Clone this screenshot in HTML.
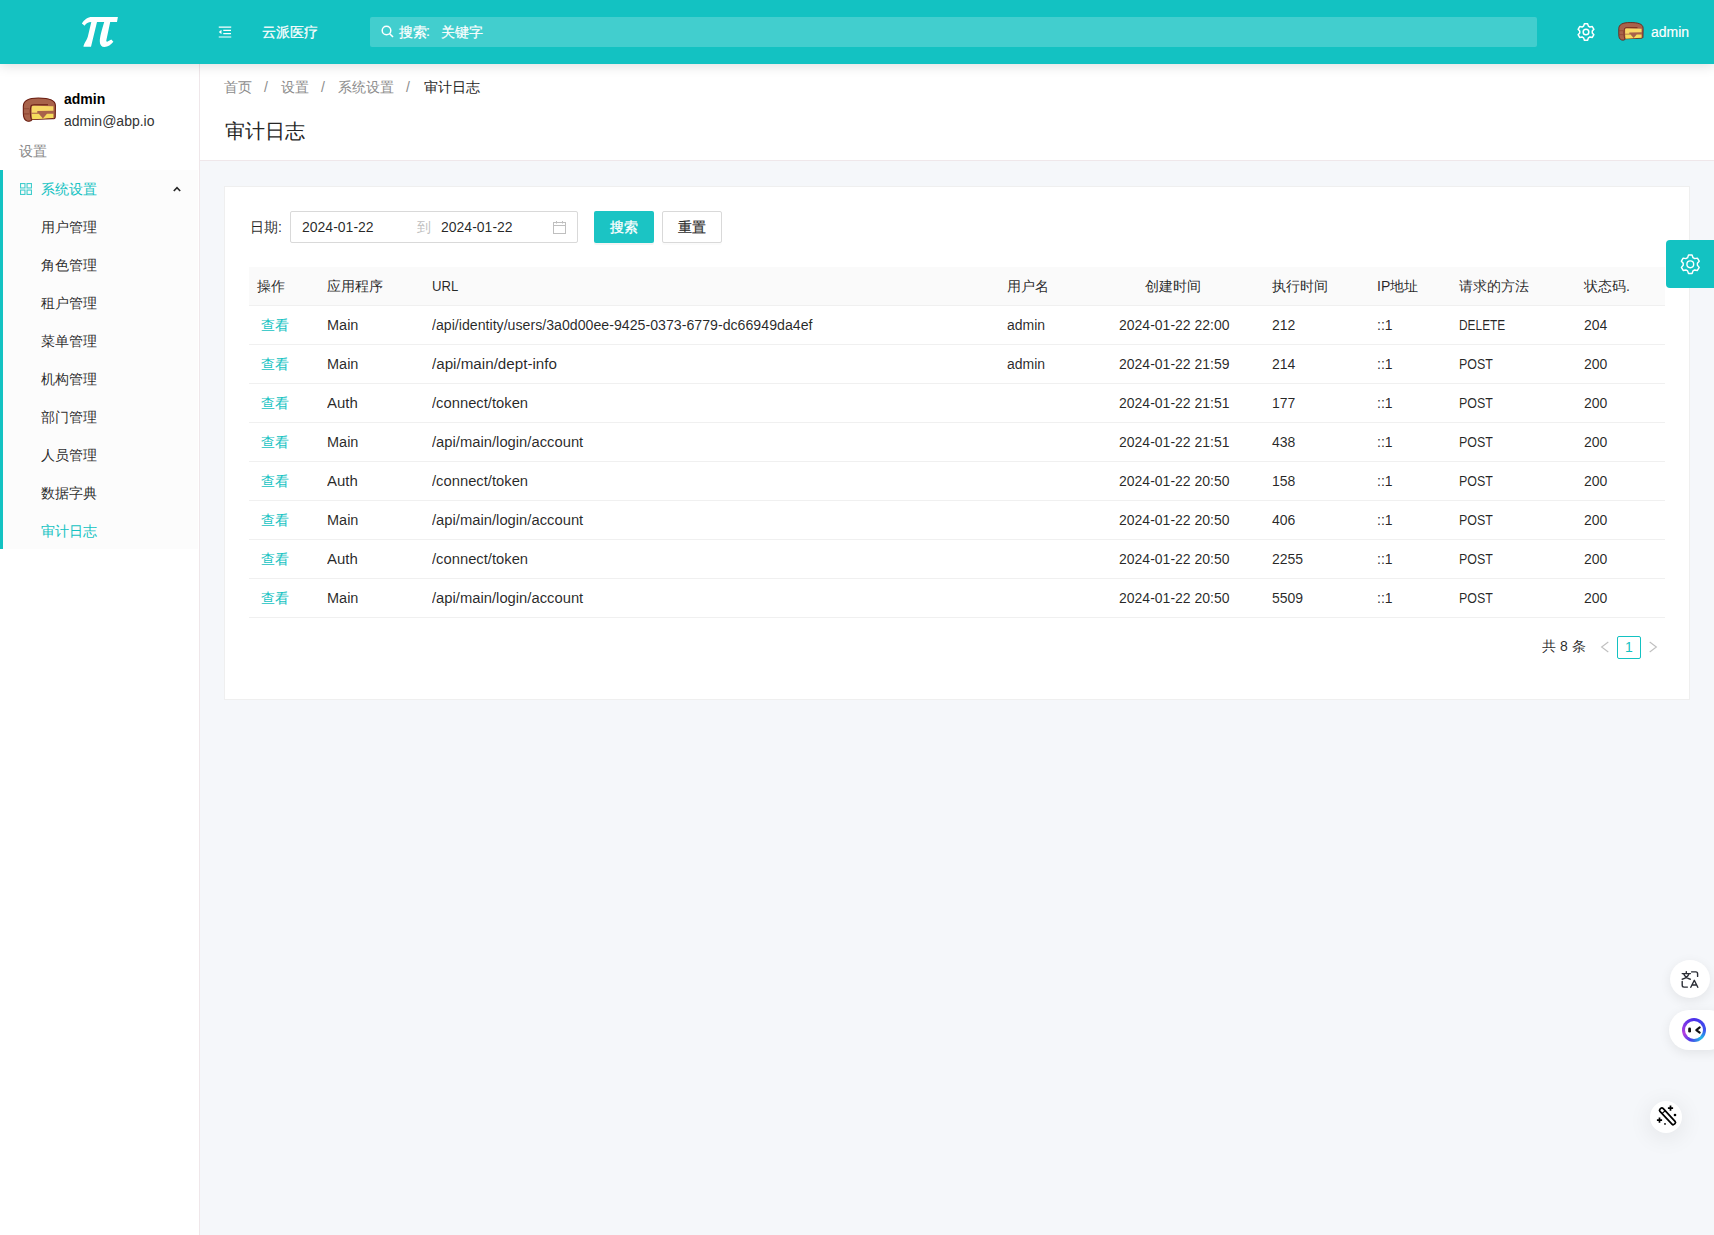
<!DOCTYPE html>
<html><head><meta charset="utf-8">
<style>
*{box-sizing:border-box;margin:0;padding:0}
html,body{width:1714px;height:1235px;overflow:hidden}
body{font-family:"Liberation Sans",sans-serif;font-size:14px;color:rgba(0,0,0,0.85);background:#f5f7fa;position:relative}
.abs{position:absolute}
.t{position:absolute;white-space:nowrap;line-height:20px}
/* header */
#hdr{position:absolute;left:0;top:0;width:1714px;height:64px;background:#13c2c2;box-shadow:0 1px 12px rgba(0,0,0,0.15);z-index:5}
#search{position:absolute;left:370px;top:17px;width:1167px;height:30px;background:rgba(255,255,255,0.2);border-radius:2px}
/* sidebar */
#side{position:absolute;left:0;top:64px;width:200px;height:1171px;background:#fff;border-right:1px solid #efe7ea}
#menu{position:absolute;left:0;top:106px;width:198px;height:379px;background:#fcfcfc}
#menu .bar{position:absolute;left:0;top:0;width:3px;height:379px;background:#13c2c2}
/* content */
#crumb{position:absolute;left:200px;top:64px;width:1514px;height:97px;background:#fff;border-bottom:1px solid #efe7ea}
#card{position:absolute;left:224px;top:186px;width:1466px;height:514px;background:#fff;border:1px solid #efefef}
.th{position:absolute;left:249px;top:267px;width:1416px;height:39px;background:#fafafa;border-bottom:1px solid #f0f0f0}
.c{position:absolute;top:0;line-height:38px;white-space:nowrap}
.th .c{line-height:38px}
.row .c{line-height:38px}
.lk{color:#13c2c2}
.btnp{background:#1bc4c4;color:#fff;border-radius:2px;text-align:center;line-height:32px;-webkit-text-stroke:0.3px #fff;box-shadow:0 2px 0 rgba(0,0,0,0.045)}
.btnd{background:#fff;border:1px solid #d9d9d9;border-radius:2px;text-align:center;line-height:30px;-webkit-text-stroke:0.2px #262626;box-shadow:0 2px 0 rgba(0,0,0,0.015)}
.row{position:absolute;left:249px;width:1416px;height:39px;border-bottom:1px solid #f0f0f0}
</style></head>
<body>
<div id="hdr">
  <svg class="abs" style="left:76px;top:10px" width="48" height="44" viewBox="0 0 48 44"><path fill="#fff" d="M5.9 13.4 C8.5 9.5 11.5 6.95 16 6.95 L41.9 6.95 L41 12 L34.2 12.1 L30.3 30.6 C30.2 31.6 30.8 32 31.6 31.5 L35.3 29.5 L37.4 31.7 C35 34.5 32 37 28.5 37 C25.5 37 23.8 35 23.8 31.5 C23.8 27.5 25.5 21 28.2 12.1 L21 12.1 L15 36.7 L7.5 36.7 C7.5 34 10.5 31 11.8 26.7 L15.3 12.1 C12 12.1 10.3 13.3 8.6 15.7 Z"/></svg>
  <svg class="abs" style="left:217px;top:24px" width="16" height="16" viewBox="0 0 1024 1024"><path fill="#fff" d="M408 442h480c4.4 0 8-3.6 8-8v-56c0-4.4-3.6-8-8-8H408c-4.4 0-8 3.6-8 8v56c0 4.4 3.6 8 8 8zm-8 204c0 4.4 3.6 8 8 8h480c4.4 0 8-3.6 8-8v-56c0-4.4-3.6-8-8-8H408c-4.4 0-8 3.6-8 8v56zm504-486H120c-4.4 0-8 3.6-8 8v56c0 4.4 3.6 8 8 8h784c4.4 0 8-3.6 8-8v-56c0-4.4-3.6-8-8-8zm0 632H120c-4.4 0-8 3.6-8 8v56c0 4.4 3.6 8 8 8h784c4.4 0 8-3.6 8-8v-56c0-4.4-3.6-8-8-8zM115.4 518.9L271.7 642c5.8 4.6 14.4.5 14.4-6.9V388.9c0-7.4-8.5-11.5-14.4-6.9L115.4 505.1a8.7 8.7 0 000 13.8z"/></svg>
  <div class="t" style="left:262px;top:22px;color:#fff;-webkit-text-stroke:0.25px #fff">云派医疗</div>
  <div id="search">
    <svg class="abs" style="left:11px;top:8px" width="13" height="13" viewBox="0 0 13 13"><circle cx="5.5" cy="5.5" r="4.3" stroke="#fff" stroke-width="1.5" fill="none"/><path d="M8.7 8.7L12 12" stroke="#fff" stroke-width="1.6"/></svg>
    <div class="t" style="left:29px;top:5px;color:#fff;-webkit-text-stroke:0.2px #fff">搜索</div>
    <div class="t" style="left:56px;top:4px;color:#fff;-webkit-text-stroke:0.2px #fff">:</div>
    <div class="t" style="left:71px;top:5px;color:#fff;-webkit-text-stroke:0.2px #fff">关键字</div>
  </div>
  <svg class="abs" style="left:1576px;top:22px" width="20" height="20" viewBox="0 0 24 24"><path fill="none" stroke="#fff" stroke-width="1.8" stroke-linejoin="round" d="M9.15 4.95 L10.09 2.18 L13.91 2.18 L14.85 4.95 L16.68 6.01 L19.55 5.44 L21.46 8.74 L19.53 10.94 L19.53 13.06 L21.46 15.26 L19.55 18.56 L16.68 17.99 L14.85 19.05 L13.91 21.82 L10.09 21.82 L9.15 19.05 L7.32 17.99 L4.45 18.56 L2.54 15.26 L4.47 13.06 L4.47 10.94 L2.54 8.74 L4.45 5.44 L7.32 6.01Z"/><circle cx="12" cy="12" r="3.4" fill="none" stroke="#fff" stroke-width="1.8"/></svg>
  <svg viewBox="4 6 37 28" width="28.6" height="21.7" style="position:absolute;left:1616.7px;top:21px" preserveAspectRatio="none"><path d="M6.3 16 C6.3 10.5 11 8 21 8 C31 8 37.8 9.5 37.8 15.5 L37.6 26.5 C37.6 28 36.5 28.3 35 28.2 L15 29 C14 30.8 12 31 10 30.5 C7 29.5 6.3 27 6.3 23 Z" fill="#a8624a" stroke="#6a1e12" stroke-width="1.1"/><path d="M14.5 17 C14.5 15.8 15.5 15.5 17 15.5 L35.8 16 L35.8 20.5 L20 20.8 L20 22.5 L14.5 22.5 Z" fill="#f8d866"/><path d="M14.5 23.5 L21.5 23.5 L25.5 28 L29.5 23.3 L35.8 23.3 L35.8 27.6 L29.8 27.8 L26 28.2 L15 28.8 Z" fill="#f6dc5c"/><path d="M13.6 16.5 C13.6 15 15 14.6 17 14.6 L30.5 14.6" fill="none" stroke="#6a1e12" stroke-width="1"/><path d="M13.8 16.5 C12.8 18 12.8 26 14.3 29.3" fill="none" stroke="#6a1e12" stroke-width="1"/><path d="M7 18.5 H12 M7 23.5 H12" stroke="#7a3020" stroke-width="1" opacity="0.5"/></svg>
  <div class="t" style="left:1651px;top:22px;color:#fff;-webkit-text-stroke:0.15px #fff">admin</div>
</div>

<div id="side">
  <svg viewBox="4 6 37 28" width="37.7" height="28.6" style="position:absolute;left:21.1px;top:31.5px" preserveAspectRatio="none"><path d="M6.3 16 C6.3 10.5 11 8 21 8 C31 8 37.8 9.5 37.8 15.5 L37.6 26.5 C37.6 28 36.5 28.3 35 28.2 L15 29 C14 30.8 12 31 10 30.5 C7 29.5 6.3 27 6.3 23 Z" fill="#a8624a" stroke="#6a1e12" stroke-width="1.1"/><path d="M14.5 17 C14.5 15.8 15.5 15.5 17 15.5 L35.8 16 L35.8 20.5 L20 20.8 L20 22.5 L14.5 22.5 Z" fill="#f8d866"/><path d="M14.5 23.5 L21.5 23.5 L25.5 28 L29.5 23.3 L35.8 23.3 L35.8 27.6 L29.8 27.8 L26 28.2 L15 28.8 Z" fill="#f6dc5c"/><path d="M13.6 16.5 C13.6 15 15 14.6 17 14.6 L30.5 14.6" fill="none" stroke="#6a1e12" stroke-width="1"/><path d="M13.8 16.5 C12.8 18 12.8 26 14.3 29.3" fill="none" stroke="#6a1e12" stroke-width="1"/><path d="M7 18.5 H12 M7 23.5 H12" stroke="#7a3020" stroke-width="1" opacity="0.5"/></svg>
  <div class="t" style="left:64px;top:25px;font-weight:bold;color:#000">admin</div>
  <div class="t" style="left:64px;top:47px;color:#333">admin@abp.io</div>
  <div class="t" style="left:19px;top:77px;color:#888">设置</div>
  <div id="menu">
    <div class="bar"></div>
    <svg class="abs" style="left:20px;top:13px" width="12" height="12" viewBox="0 0 12 12"><g fill="none" stroke="#13c2c2" stroke-width="1.1" opacity="0.8"><rect x="0.55" y="0.55" width="4.4" height="4.4"/><rect x="7.05" y="0.55" width="4.4" height="4.4"/><rect x="0.55" y="7.05" width="4.4" height="4.4"/><rect x="7.05" y="7.05" width="4.4" height="4.4"/></g></svg>
    <div class="t" style="left:41px;top:9px;color:#13c2c2">系统设置</div>
    <svg class="abs" style="left:173px;top:16px" width="8" height="6" viewBox="0 0 8 6"><path d="M0.8 5L4 1.6L7.2 5" fill="none" stroke="#262626" stroke-width="1.6"/></svg>
    <div class="t" style="left:41px;top:47px">用户管理</div>
    <div class="t" style="left:41px;top:85px">角色管理</div>
    <div class="t" style="left:41px;top:123px">租户管理</div>
    <div class="t" style="left:41px;top:161px">菜单管理</div>
    <div class="t" style="left:41px;top:199px">机构管理</div>
    <div class="t" style="left:41px;top:237px">部门管理</div>
    <div class="t" style="left:41px;top:275px">人员管理</div>
    <div class="t" style="left:41px;top:313px">数据字典</div>
    <div class="t" style="left:41px;top:351px;color:#13c2c2">审计日志</div>
  </div>
</div>

<div id="crumb">
  <div class="t" style="left:24px;top:13px;color:#8c8c8c">首页</div>
  <div class="t" style="left:64px;top:13px;color:#8c8c8c">/</div>
  <div class="t" style="left:81px;top:13px;color:#8c8c8c">设置</div>
  <div class="t" style="left:121px;top:13px;color:#8c8c8c">/</div>
  <div class="t" style="left:138px;top:13px;color:#8c8c8c">系统设置</div>
  <div class="t" style="left:206px;top:13px;color:#8c8c8c">/</div>
  <div class="t" style="left:224px;top:13px;color:#262626">审计日志</div>
  <div class="t" style="left:25px;top:53px;font-size:20px;line-height:28px;color:#262626">审计日志</div>
</div>

<div id="card">
  <div class="t" style="left:25px;top:30px">日期:</div>
  <div class="abs" style="left:65px;top:24px;width:288px;height:32px;border:1px solid #d9d9d9;border-radius:2px">
    <div class="t" style="left:11px;top:5px">2024-01-22</div>
    <div class="t" style="left:126px;top:5px;color:#bfbfbf">到</div>
    <div class="t" style="left:150px;top:5px">2024-01-22</div>
    <svg class="abs" style="left:262px;top:9px" width="13" height="13" viewBox="0 0 13 13"><rect x="0.5" y="1.5" width="12" height="11" fill="none" stroke="#bfbfbf"/><path d="M0.5 4.5H12.5M3.5 0V2.5M9.5 0V2.5" stroke="#bfbfbf"/></svg>
  </div>
  <div class="abs btnp" style="left:369px;top:24px;width:60px;height:32px">搜索</div>
  <div class="abs btnd" style="left:437px;top:24px;width:60px;height:32px">重置</div>
</div>
<div class="th">
  <span class="c" style="left:8px">操作</span><span class="c" style="left:78px">应用程序</span><span class="c" style="left:183px;transform:scaleX(0.94);transform-origin:0 50%">URL</span><span class="c" style="left:758px">用户名</span><span class="c" style="left:896px">创建时间</span><span class="c" style="left:1023px">执行时间</span><span class="c" style="left:1128px">IP地址</span><span class="c" style="left:1210px">请求的方法</span><span class="c" style="left:1335px">状态码.</span>
</div>
<div class="row" style="top:306px">
<span class="c lk" style="left:12px">查看</span><span class="c" style="left:78px;transform:scaleX(1.035);transform-origin:0 50%">Main</span><span class="c" style="left:183px;transform:scaleX(1.012);transform-origin:0 50%">/api/identity/users/3a0d00ee-9425-0373-6779-dc66949da4ef</span><span class="c" style="left:758px">admin</span><span class="c" style="left:870px">2024-01-22 22:00</span><span class="c" style="left:1023px">212</span><span class="c" style="left:1128px">::1</span><span class="c" style="left:1210px;transform:scaleX(0.85);transform-origin:0 50%">DELETE</span><span class="c" style="left:1335px">204</span>
</div>
<div class="row" style="top:345px">
<span class="c lk" style="left:12px">查看</span><span class="c" style="left:78px;transform:scaleX(1.035);transform-origin:0 50%">Main</span><span class="c" style="left:183px;transform:scaleX(1.085);transform-origin:0 50%">/api/main/dept-info</span><span class="c" style="left:758px">admin</span><span class="c" style="left:870px">2024-01-22 21:59</span><span class="c" style="left:1023px">214</span><span class="c" style="left:1128px">::1</span><span class="c" style="left:1210px;transform:scaleX(0.89);transform-origin:0 50%">POST</span><span class="c" style="left:1335px">200</span>
</div>
<div class="row" style="top:384px">
<span class="c lk" style="left:12px">查看</span><span class="c" style="left:78px;transform:scaleX(1.07);transform-origin:0 50%">Auth</span><span class="c" style="left:183px;transform:scaleX(1.055);transform-origin:0 50%">/connect/token</span><span class="c" style="left:758px"></span><span class="c" style="left:870px">2024-01-22 21:51</span><span class="c" style="left:1023px">177</span><span class="c" style="left:1128px">::1</span><span class="c" style="left:1210px;transform:scaleX(0.89);transform-origin:0 50%">POST</span><span class="c" style="left:1335px">200</span>
</div>
<div class="row" style="top:423px">
<span class="c lk" style="left:12px">查看</span><span class="c" style="left:78px;transform:scaleX(1.035);transform-origin:0 50%">Main</span><span class="c" style="left:183px;transform:scaleX(1.056);transform-origin:0 50%">/api/main/login/account</span><span class="c" style="left:758px"></span><span class="c" style="left:870px">2024-01-22 21:51</span><span class="c" style="left:1023px">438</span><span class="c" style="left:1128px">::1</span><span class="c" style="left:1210px;transform:scaleX(0.89);transform-origin:0 50%">POST</span><span class="c" style="left:1335px">200</span>
</div>
<div class="row" style="top:462px">
<span class="c lk" style="left:12px">查看</span><span class="c" style="left:78px;transform:scaleX(1.07);transform-origin:0 50%">Auth</span><span class="c" style="left:183px;transform:scaleX(1.055);transform-origin:0 50%">/connect/token</span><span class="c" style="left:758px"></span><span class="c" style="left:870px">2024-01-22 20:50</span><span class="c" style="left:1023px">158</span><span class="c" style="left:1128px">::1</span><span class="c" style="left:1210px;transform:scaleX(0.89);transform-origin:0 50%">POST</span><span class="c" style="left:1335px">200</span>
</div>
<div class="row" style="top:501px">
<span class="c lk" style="left:12px">查看</span><span class="c" style="left:78px;transform:scaleX(1.035);transform-origin:0 50%">Main</span><span class="c" style="left:183px;transform:scaleX(1.056);transform-origin:0 50%">/api/main/login/account</span><span class="c" style="left:758px"></span><span class="c" style="left:870px">2024-01-22 20:50</span><span class="c" style="left:1023px">406</span><span class="c" style="left:1128px">::1</span><span class="c" style="left:1210px;transform:scaleX(0.89);transform-origin:0 50%">POST</span><span class="c" style="left:1335px">200</span>
</div>
<div class="row" style="top:540px">
<span class="c lk" style="left:12px">查看</span><span class="c" style="left:78px;transform:scaleX(1.07);transform-origin:0 50%">Auth</span><span class="c" style="left:183px;transform:scaleX(1.055);transform-origin:0 50%">/connect/token</span><span class="c" style="left:758px"></span><span class="c" style="left:870px">2024-01-22 20:50</span><span class="c" style="left:1023px">2255</span><span class="c" style="left:1128px">::1</span><span class="c" style="left:1210px;transform:scaleX(0.89);transform-origin:0 50%">POST</span><span class="c" style="left:1335px">200</span>
</div>
<div class="row" style="top:579px">
<span class="c lk" style="left:12px">查看</span><span class="c" style="left:78px;transform:scaleX(1.035);transform-origin:0 50%">Main</span><span class="c" style="left:183px;transform:scaleX(1.056);transform-origin:0 50%">/api/main/login/account</span><span class="c" style="left:758px"></span><span class="c" style="left:870px">2024-01-22 20:50</span><span class="c" style="left:1023px">5509</span><span class="c" style="left:1128px">::1</span><span class="c" style="left:1210px;transform:scaleX(0.89);transform-origin:0 50%">POST</span><span class="c" style="left:1335px">200</span>
</div>
<div class="t" style="left:1542px;top:636px">共 8 条</div>
<svg class="abs" style="left:1600px;top:641px" width="10" height="12" viewBox="0 0 10 12"><path d="M8.3 1L1.6 6L8.3 11" fill="none" stroke="#bfbfbf" stroke-width="1.1"/></svg>
<div class="abs" style="left:1617px;top:636px;width:24px;height:23px;border:1px solid #13c2c2;border-radius:2px;color:#13c2c2;text-align:center;line-height:21px">1</div>
<svg class="abs" style="left:1648px;top:641px" width="10" height="12" viewBox="0 0 10 12"><path d="M1.7 1L8.4 6L1.7 11" fill="none" stroke="#bfbfbf" stroke-width="1.1"/></svg>

<div class="abs" style="left:1666px;top:240px;width:48px;height:48px;background:#13c2c2;border-radius:4px 0 0 4px">
  <svg class="abs" style="left:12.7px;top:12.7px" width="22.6" height="22.6" viewBox="0 0 24 24"><path fill="none" stroke="#fff" stroke-width="1.5" stroke-linejoin="round" d="M9.15 4.95 L10.09 2.18 L13.91 2.18 L14.85 4.95 L16.68 6.01 L19.55 5.44 L21.46 8.74 L19.53 10.94 L19.53 13.06 L21.46 15.26 L19.55 18.56 L16.68 17.99 L14.85 19.05 L13.91 21.82 L10.09 21.82 L9.15 19.05 L7.32 17.99 L4.45 18.56 L2.54 15.26 L4.47 13.06 L4.47 10.94 L2.54 8.74 L4.45 5.44 L7.32 6.01Z"/><circle cx="12" cy="12" r="3.6" fill="none" stroke="#fff" stroke-width="1.5"/></svg>
</div>

<div class="abs" style="left:1670px;top:960px;width:40px;height:38px;border-radius:50%;background:#fff;box-shadow:0 3px 12px rgba(0,0,0,0.08)">
  <svg class="abs" style="left:0;top:0" width="40" height="38" viewBox="0 0 40 38"><g fill="none" stroke="#2b2e36" stroke-width="1.4" stroke-linecap="round" stroke-linejoin="round"><path d="M12.2 13.6H20.4M16.3 11.6V13.4M13.6 13.8C15 17 17.5 18.6 20.3 19.2M19 13.8C17.8 17 15.5 18.6 12.2 19.2"/><path d="M21.6 11.9H25.8C26.9 11.9 27.6 12.6 27.6 13.7V16.4"/><path d="M12.2 21.4V25.3C12.2 26.4 12.9 27.1 14 27.1H17.4"/><path d="M20.8 27.3L24.3 20.3L27.8 27.3M22 25H26.6"/></g></svg>
</div>
<div class="abs" style="left:1669px;top:1010px;width:60px;height:40px;border-radius:20px;background:#fff;box-shadow:0 3px 12px rgba(0,0,0,0.08)">
  <div class="abs" style="left:13px;top:8px;width:24px;height:24px;border-radius:50%;background:conic-gradient(from 0deg,#4a30ea,#3d52ee 90deg,#22b8e6 140deg,#4a3ee8 200deg,#b43ee0 250deg,#6a34e8 320deg,#4a30ea)"></div>
  <div class="abs" style="left:16px;top:11px;width:18px;height:18px;border-radius:50%;background:#fff"></div>
  <svg class="abs" style="left:0;top:0" width="40" height="40" viewBox="0 0 40 40"><rect x="19.2" y="17.6" width="2.8" height="5" rx="1.3" fill="#111"/><path d="M30.7 17.4L27.3 20.1L30.7 22.7" fill="none" stroke="#111" stroke-width="2.1" stroke-linejoin="round" stroke-linecap="round"/></svg>
</div>
<div class="abs" style="left:1650px;top:1101px;width:32px;height:32px;border-radius:50%;background:#fff;box-shadow:0 4px 24px rgba(0,0,0,0.09)">
  <svg class="abs" style="left:0;top:0" width="32" height="32" viewBox="0 0 32 32"><g transform="rotate(47 17.5 15.3)"><rect x="7.1" y="13.2" width="20.8" height="4.2" rx="1.6" fill="none" stroke="#000" stroke-width="1.7"/><path d="M11.8 13.4V17.2" stroke="#000" stroke-width="1.2"/></g><path d="M20.5 4.6V9.8M17.9 7.2H23.1M9.5 16.6V21.8M6.9 19.2H12.1" stroke="#000" stroke-width="1.7"/><circle cx="25" cy="14" r="1.3" fill="#000"/><circle cx="15" cy="22.9" r="0.9" fill="#000"/></svg>
</div>
</body></html>
